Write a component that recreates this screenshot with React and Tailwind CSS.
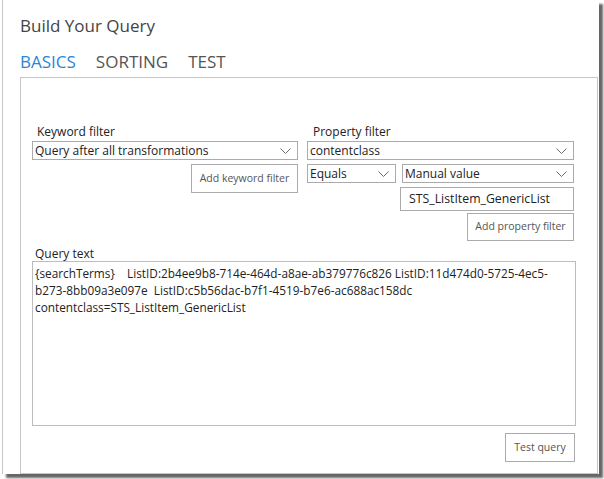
import React from "react";

const font = { fontFamily: '"Open Sans", "Noto Sans", sans-serif' };

function Chevron() {
  return (
    <svg width="11" height="6" viewBox="0 0 11 6" className="shrink-0">
      <path d="M0.5 0.5 L5.5 5.5 L10.5 0.5" fill="none" stroke="#6b6b6b" strokeWidth="1" />
    </svg>
  );
}

function Select({ value, className = "" }) {
  return (
    <div
      className={`flex items-center justify-between h-[19px] border border-[#ababab] bg-white pl-[2px] pr-[6px] text-[12px] text-[#222] ${className}`}
    >
      <span className="leading-none">{value}</span>
      <Chevron />
    </div>
  );
}

function Button({ label, className = "" }) {
  return (
    <button
      className={`flex items-center justify-center border border-[#ababab] bg-white text-[10.5px] text-[#555] ${className}`}
    >
      {label}
    </button>
  );
}

export default function App() {
  return (
    <div className="w-[604px] h-[479px] bg-white relative overflow-hidden" style={font}>
      <div className="ml-[2px] w-[597px] h-[474px] border-l border-[#c8c8c8] shadow-[4px_4px_2px_rgba(0,0,0,0.6)] bg-white pl-[17px] flex flex-col">
        <h1 className="pt-[15px] h-[51px] text-[17px] text-[#444] leading-[22px]">Build Your Query</h1>
        <div className="flex gap-[20px] text-[17px] leading-[20px] h-[26px] pt-[1px]">
          <span className="text-[#2a86d6]">BASICS</span>
          <span className="text-[#555]">SORTING</span>
          <span className="text-[#555]">TEST</span>
        </div>
        <div className="w-[578px] flex-1 border border-[#c6c6c6] pl-[11px] pr-[22px] pt-[47px]">
          <div className="flex gap-[9px]">
            <div className="w-[266px] flex flex-col">
              <div className="pl-[5px] h-[16px] text-[12px] text-[#222] leading-[14px]">Keyword filter</div>
              <Select value="Query after all transformations" />
              <div className="flex justify-end mt-[4px]">
                <Button label="Add keyword filter" className="w-[107px] h-[29px]" />
              </div>
            </div>
            <div className="w-[267px] flex flex-col">
              <div className="pl-[6px] h-[16px] text-[12px] text-[#222] leading-[14px]">Property filter</div>
              <Select value="contentclass" />
              <div className="flex gap-[6px] mt-[4px]">
                <Select value="Equals" className="w-[89px]" />
                <Select value="Manual value" className="flex-1" />
              </div>
              <div className="flex justify-end mt-[4px]">
                <div className="w-[174px] h-[24px] border border-[#ababab] flex items-center pl-[8px] text-[12.3px] text-[#222]">
                  STS_ListItem_GenericList
                </div>
              </div>
              <div className="flex justify-end mt-[2px]">
                <Button label="Add property filter" className="w-[107px] h-[28px]" />
              </div>
            </div>
          </div>
          <div className="mt-[6px] pl-[3px] h-[14px] text-[12px] text-[#222] leading-[14px]">Query text</div>
          <div className="w-[544px] h-[165px] border border-[#bdbdbd] px-[2px] pt-[3px] text-[11.8px] text-[#222] leading-[17px] whitespace-pre">
            <div>{"{searchTerms}    ListID:2b4ee9b8-714e-464d-a8ae-ab379776c826 ListID:11d474d0-5725-4ec5-"}</div>
            <div>{"b273-8bb09a3e097e  ListID:c5b56dac-b7f1-4519-b7e6-ac688ac158dc"}</div>
            <div>{"contentclass=STS_ListItem_GenericList"}</div>
          </div>
          <div className="flex justify-end w-[543px] mt-[7px]">
            <Button label="Test query" className="w-[70px] h-[29px]" />
          </div>
        </div>
      </div>
    </div>
  );
}
